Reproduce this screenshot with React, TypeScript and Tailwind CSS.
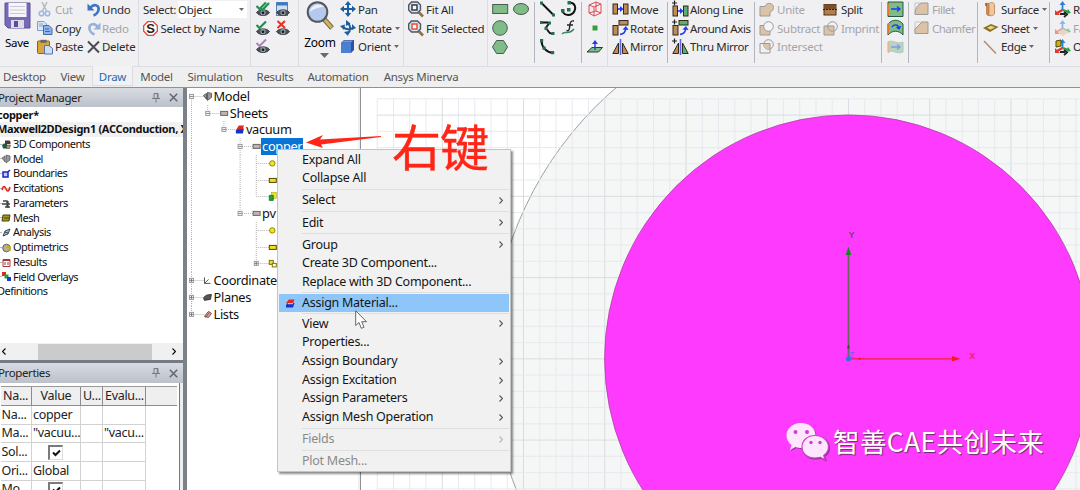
import type { ReactNode } from "react";

type P = { children?: ReactNode };

/* ---------- ribbon building blocks ---------- */

function Group({ w, dark, tall, children }: P & { w: string; dark?: boolean; tall?: boolean }) {
  return (
    <div className={`relative flex shrink-0 ${w}`}>
      {children}
      <span
        className={`absolute right-0 top-0 w-px ${tall ? "h-[66px]" : "mt-0.5 h-[61px]"} ${
          dark ? "bg-[#b2b5bd]" : "bg-[#dcdde2]"
        }`}
      />
    </div>
  );
}

function Col({ w, children }: P & { w: string }) {
  return <div className={`flex shrink-0 flex-col ${w}`}>{children}</div>;
}

function Tool({
  icon,
  label,
  off,
  caret,
  iw = "w-[18px]",
}: {
  icon: ReactNode;
  label?: string;
  off?: boolean;
  caret?: boolean;
  iw?: string;
}) {
  return (
    <div className={`flex h-[18.7px] items-center ${off ? "text-[#a4a4a8]" : "text-[#2b2b2b]"}`}>
      <span className={`flex shrink-0 items-center ${iw}`}>{icon}</span>
      {label && <span className="relative top-[0.4px] whitespace-nowrap">{label}</span>}
      {caret && <Caret />}
    </div>
  );
}

function Caret({ big }: { big?: boolean }) {
  return big ? (
    <svg width="9" height="5" viewBox="0 0 9 5">
      <path d="M0 0H9L4.5 5Z" fill="#6a6a6e" />
    </svg>
  ) : (
    <svg className="ml-[3px] shrink-0" width="5" height="3" viewBox="0 0 5 3">
      <path d="M0 0H5L2.5 3Z" fill="#6a6a6e" />
    </svg>
  );
}

function Ico({ w = 16, h = 16, dim, children }: P & { w?: number; h?: number; dim?: boolean }) {
  return (
    <svg width={w} height={h} viewBox={`0 0 ${w} ${h}`} fill="none" className={`shrink-0 overflow-visible ${dim ? "opacity-50" : ""}`}>
      {children}
    </svg>
  );
}

/* ---------- ribbon icons ---------- */

const SaveIcon = () => (
  <Ico w={27} h={27}>
    <path d="M1 1H26V26H4L1 23Z" fill="#7868b8" stroke="#5d5099" />
    <rect x="4.500" y="1" width="18" height="14" fill="#f5f5fa" />
    <path d="M6 4.500H21M6 8H21M6 11.500H21" stroke="#c9c9d4" />
    <rect x="7" y="18" width="13" height="8" fill="#dcdce6" />
    <rect x="10" y="19" width="4" height="6" fill="#5a4e97" />
  </Ico>
);

const CutIcon = () => (
  <Ico dim>
    <path d="M5 1L9.500 10M10 1L5.500 10" stroke="#7a8594" strokeWidth="1.600" />
    <circle cx="4.500" cy="12.500" r="2.300" stroke="#4a86cf" strokeWidth="1.600" />
    <circle cx="10.500" cy="12.500" r="2.300" stroke="#4a86cf" strokeWidth="1.600" />
  </Ico>
);

const CopyIcon = () => (
  <Ico>
    <path d="M.5 1.500H7L9.500 4V10.500H.5Z" fill="#dce8fa" stroke="#7d9cc9" />
    <path d="M2 4H6M2 6H6" stroke="#7d9cc9" />
    <path d="M6.500 5.500H12L15 8.500V14.500H6.500Z" fill="#8fb4ea" stroke="#45699f" />
    <path d="M8 9H12M8 11.500H13" stroke="#3f67a8" />
  </Ico>
);

const PasteIcon = () => (
  <Ico>
    <rect x=".5" y="2" width="12" height="12.500" rx="1" fill="#dba53a" stroke="#8a6319" />
    <rect x="3.500" y=".8" width="6" height="3" fill="#666" />
    <path d="M7.500 6.500H12L15.500 9.500V15H7.500Z" fill="#cfdef6" stroke="#5476ad" />
  </Ico>
);

const UndoIcon = ({ dim }: { dim?: boolean }) => (
  <Ico w={14} h={15} dim={dim}>
    <g transform={dim ? "translate(14 0) scale(-1 1)" : undefined}>
      <path d="M3.500 5.500C7 1.500 12.500 3 11.500 8C11 10.500 9 12.500 6.500 13.500" stroke="#3f73c4" strokeWidth="2.600" />
      <path d="M.5 1.500V8.500H7.500Z" fill="#3f73c4" />
    </g>
  </Ico>
);

const DeleteIcon = () => (
  <Ico w={14} h={14}>
    <path d="M1 1.500L12 12.500M12 1.500L1 12.500" stroke="#4b4b4f" strokeWidth="2" />
  </Ico>
);

const NameIcon = () => (
  <Ico w={15} h={15}>
    <path d="M4.700.7H10.300L14.300 4.700V10.300L10.300 14.300H4.700L.7 10.300V4.700Z" fill="#fff" stroke="#e0463c" strokeWidth="1.300" />
    <text x="7.500" y="12" textAnchor="middle" className="font-['Liberation_Sans'] text-[13px] font-bold tracking-normal" fill="#222">
      S
    </text>
  </Ico>
);

function EyeIcon({ kind }: { kind: "all" | "sheet" | "on" | "off" | "faint" }) {
  return (
    <Ico w={14} h={15}>
      {kind === "sheet" && (
        <>
          <rect x=".5" y=".5" width="11" height="13" fill="#cfe0f5" stroke="#5b84bd" />
          <rect x=".5" y=".5" width="11" height="3" fill="#3f78c3" />
        </>
      )}
      <path d="M.5 10.500C3 7 11 7 13.500 10.500C11 14.500 3 14.500.5 10.500Z" fill="#4b5157" stroke="#34393d" />
      <circle cx="7" cy="10.700" r="2.600" fill="#8d9aa5" />
      <circle cx="7" cy="10.700" r="1.300" fill="#15181a" />
      {(kind === "on" || kind === "all") && <path d="M.5 4L3.500 7L10 .5" stroke="#1f9150" strokeWidth="2.200" />}
      {kind === "all" && <path d="M4 5.500L6.500 8L13 1" stroke="#1f9150" strokeWidth="2.200" />}
      {kind === "faint" && <path d="M.5 4L3.500 7L10 .5" stroke="#b07dbb" strokeWidth="1.800" />}
      {kind === "off" && <path d="M1.500 0L9 7M9 0L1.500 7" stroke="#ef2b20" strokeWidth="2" />}
    </Ico>
  );
}

const ZoomIcon = () => (
  <Ico w={29} h={30}>
    <path d="M18 19L26 28" stroke="#77683c" strokeWidth="5" />
    <path d="M18.500 19.500L25.500 27.500" stroke="#cdb469" strokeWidth="3" />
    <circle cx="11.500" cy="12" r="9.800" fill="#b5c9ee" stroke="#55585f" strokeWidth="2" />
    <path d="M4 12C5 5 13 2 18 7C15 7 8 8 4 12Z" fill="#e9f1fd" />
  </Ico>
);

const PanIcon = () => (
  <Ico>
    <path d="M8 2V14M2 8H14" stroke="#1d5f9e" strokeWidth="2" />
    <path d="M8 0L11.200 4H4.800ZM8 16L11.200 12H4.800ZM0 8L4 4.800V11.200ZM16 8L12 4.800V11.200Z" fill="#1d5f9e" />
  </Ico>
);

const RotateViewIcon = () => (
  <Ico>
    <path d="M8 3C11 6 11 11 7.500 14M3 7C6 10 11 10 14 7" stroke="#1d5f9e" strokeWidth="2" />
    <path d="M6 0L10.500 3.500L6 6ZM4 12L8 16L9 11ZM0 6L5 4.500L4 10ZM16 8L12 4V10Z" fill="#1d5f9e" />
  </Ico>
);

const OrientIcon = () => (
  <Ico w={15} h={15}>
    <path d="M1 4L4 1H14V11L11 14H1Z" fill="#2c559f" />
    <rect x="1" y="4" width="10" height="10" rx="1" fill="#4a80d4" />
    <path d="M2 3.500L4 1.500H13L11 3.500Z" fill="#6f9be0" />
  </Ico>
);

const FitIcon = ({ c }: { c: string }) => (
  <Ico>
    <path d="M10.500 11L15 15.500" stroke="#8b7440" strokeWidth="2.600" />
    <path d="M3.500 1H9.500L12.500 4V9L9.500 12H3.500L.7 9V4Z" fill="#d7e3f7" stroke="#505560" strokeWidth="1.400" />
    <rect x="4" y="4" width="5" height="5" fill="#fff" stroke={c} strokeWidth="1.500" />
  </Ico>
);

const green = "#7fbc88";

const LineIcons = {
  line: (
    <Ico>
      <path d="M1.500 2L14 14.500" stroke="#111" strokeWidth="2" />
      <path d="M0 .5H3V3.500H0ZM12 12.500H15V15.500H12Z" fill="#23704f" />
    </Ico>
  ),
  arc: (
    <Ico>
      <path d="M9 1.500C13.500 2 15.500 6 13.500 10C11 15 3.500 15.500 1.500 10" stroke="#111" strokeWidth="2" />
      <path d="M6.500 0H10V3.500H6.500ZM0 8H3.500V11.500H0ZM6 7H9.500V10.500H6Z" fill="#23704f" />
    </Ico>
  ),
  spline: (
    <Ico>
      <path d="M1 2.500H8C11 4 4 7 6.500 9C9 10.500 8 14 12.500 13.500" stroke="#111" strokeWidth="1.800" />
      <path d="M0 1H3V4H0ZM8 1.500H11V4.500H8ZM4.500 7H7.500V10H4.500ZM11.500 12H14.500V15H11.500Z" fill="#23704f" />
    </Ico>
  ),
  eq: (
    <Ico>
      <path d="M13 1C9 0 9 4 8.500 8C8 11 7 11 5.500 10.500M6 5H12" stroke="#222" strokeWidth="1.400" />
      <path d="M1 14C4 10 7 16 13 9" stroke="#3c8664" strokeWidth="1.400" />
    </Ico>
  ),
  arc3: (
    <Ico>
      <path d="M1.500 1.500C1.500 8 6 13 13 14" stroke="#111" strokeWidth="2" />
      <path d="M0 0H3.200V3.200H0ZM2.500 7.500H5.700V10.700H2.500ZM11 12H14.200V15.200H11Z" fill="#23704f" />
    </Ico>
  ),
};

const brown = "#c08c55";

const MoveIcon = ({ second = brown, plus }: { second?: string; plus?: boolean }) => (
  <Ico w={17}>
    <rect x="1" y={plus ? 5 : 3} width="4.500" height="10" fill={brown} stroke="#33291c" />
    <rect x="11.500" y={plus ? 5 : 3} width="4.500" height="10" fill={second} stroke="#33291c" />
    <path d={plus ? "M6 10H9" : "M6 8H9"} stroke="#2239ee" strokeWidth="1.600" />
    <path d={plus ? "M8 7L11.500 10L8 13Z" : "M8 5L11.500 8L8 11Z"} fill="#2239ee" />
    {plus && <Plus />}
  </Ico>
);

const Plus = () => <path d="M0 2H5M2.500 -.5V4.500" stroke="#222" strokeWidth="1.200" />;

const TurnIcon = ({ second = brown, plus }: { second?: string; plus?: boolean }) => (
  <Ico w={17}>
    <rect x="1" y="5.500" width="5" height="9.500" fill={brown} stroke="#33291c" />
    <rect x="7" y=".5" width="9" height="4.500" fill={second} stroke="#33291c" />
    <path d="M8 14.500C11 14 13.500 12 13.500 9" stroke="#2239ee" strokeWidth="1.600" />
    <path d="M10.500 9.500L14 6L16.500 10Z" fill="#2239ee" />
    {plus && <Plus />}
  </Ico>
);

const MirrorIcon = ({ second = brown, plus }: { second?: string; plus?: boolean }) => (
  <Ico w={17}>
    <path d="M.8 14.500L6.500 4V14.500Z" fill={brown} stroke="#33291c" />
    <path d="M16.200 14.500L10.500 4V14.500Z" fill={second} stroke="#33291c" />
    <path d="M8.500 0V16" stroke="#5b68ee" strokeWidth="1.600" />
    {plus && <Plus />}
  </Ico>
);

const tan = "#dcc3a8";
const grey = "#9a9a9c";

const UniteIcon = () => (
  <Ico w={15} h={15}>
    <path d="M1 4.500H6C7 0 14.500.5 14.500 5.500C14.500 9 12 9.500 11 10V14H1Z" fill={tan} stroke={grey} />
  </Ico>
);
const SubtractIcon = () => (
  <Ico w={15} h={15}>
    <path d="M1 4.500H11V14H1Z" fill={tan} stroke={grey} />
    <circle cx="9.500" cy="5.500" r="4.800" fill="#f5f5f7" stroke={grey} />
  </Ico>
);
const IntersectIcon = () => (
  <Ico w={15} h={15}>
    <circle cx="9.500" cy="5.500" r="4.800" stroke={grey} />
    <path d="M4.500 4.500H11V10C7 10.500 5 8 4.500 4.500Z" fill={tan} />
    <path d="M1 4.500H11V14H1Z" stroke={grey} />
  </Ico>
);
const ImprintIcon = () => (
  <Ico w={15} h={15}>
    <path d="M1 5H11V14H1Z" fill={tan} stroke={grey} />
    <circle cx="9.500" cy="5.500" r="4.800" stroke={grey} />
  </Ico>
);
const SplitIcon = () => (
  <Ico w={15} h={13}>
    <rect x="1" y="1.500" width="12" height="10.500" fill="#b57f4b" stroke="#4c321a" />
    <rect x="1" y="1.500" width="12" height="4.500" fill="#7a5029" />
    <path d="M0 6.500H15" stroke="#222" strokeDasharray="2 1" />
  </Ico>
);

const SheetGreen = ({ kind }: { kind: "flat" | "bend" | "wave" }) => (
  <Ico w={17} dim={kind === "wave"}>
    {kind === "flat" && <path d="M1 1H16V15.500H1Z" fill={green} stroke="#1f5d3c" />}
    {kind === "bend" && <path d="M1 4C5 -1 12 -1 16 4V15C12 10 5 10 1 15Z" fill={green} stroke="#1f5d3c" />}
    {kind === "wave" && <path d="M1 3C6 0 10 6 16 3V13C10 16 6 10 1 13Z" fill={green} stroke="#6fa587" />}
    <path d="M1.500 3V14" stroke="#e07a31" strokeWidth="1.600" />
    {kind === "bend" ? (
      <path d="M5 7C7 4 11 4 12 8M9.500 7L12 9L13.500 6" stroke="#2239ee" strokeWidth="1.400" />
    ) : (
      <path d="M4 8H13M10 5.500L13 8L10 10.500" stroke="#2239ee" strokeWidth="1.300" />
    )}
  </Ico>
);

const FilletIcon = ({ cut }: { cut?: boolean }) => (
  <Ico w={15} h={14}>
    <path d="M1 12V1H9" stroke="#c5c5c7" />
    <path d={cut ? "M1 12.500V8L8 1H14V12.500Z" : "M1 12.500C1 5 5 1 10 1H14V12.500Z"} fill={tan} stroke={grey} />
  </Ico>
);

const SurfaceIcon = () => (
  <Ico>
    <path d="M3 2C5 1 8 3 9 4V14C7 16 3.500 15 3 13Z" fill="#c98a52" />
    <path d="M6 2.500C8 .5 11.500 1.500 11.500 4V13C10 15 7 15 6 14.500Z" fill="#f0c79d" stroke="#b98050" strokeWidth=".8" />
    <path d="M3 2V5" stroke="#865427" strokeWidth="1.400" />
  </Ico>
);
const SheetIcon = () => (
  <Ico>
    <path d="M0 8L8 4L15.500 7L7 12Z" fill="#8a7020" />
    <path d="M4 7.700L8 5.800L12 7.300L7.500 9.700Z" fill="#e6d48c" />
  </Ico>
);
const EdgeIcon = () => (
  <Ico>
    <path d="M1 2L13 14.500" stroke="#b98a66" strokeWidth="1.500" />
  </Ico>
);
const CsIcon = ({ dim, cube }: { dim?: boolean; cube?: boolean }) => (
  <Ico dim={dim}>
    <path d="M7.500 9V3" stroke="#2a80d8" strokeWidth="1.800" />
    <path d="M4.500 4L7.500 0L10.500 4Z" fill="#2a80d8" />
    <path d="M7.500 9L2 12" stroke="#e0362d" strokeWidth="2.400" />
    <path d="M0 9V14H5Z" fill="#e0362d" />
    <path d="M8 9L13 11" stroke="#2e9a49" strokeWidth="2.400" />
    <path d="M11 13L16 12L13 8Z" fill="#2e9a49" />
    {dim ? <path d="M2 12L8 9L14 12L8 16Z" fill="#e7b98e" /> : <path d="M5 13H10M9 11L12 13.500L9 16" stroke="#222" strokeWidth="1.800" />}
    {cube && <path d="M1 2L6 1V7L1 8Z" fill="#c9b412" stroke="#4f4708" />}
  </Ico>
);

function Ribbon() {
  return (
    <div className="flex h-[67px] shrink-0 overflow-hidden border-b border-[#dcdde2] bg-[#f0f0f3] text-[11.5px] leading-none tracking-[-0.27px]">
      <Group w="w-[139px]" tall>
        <div className="flex w-[37px] flex-col items-center pt-[2px] pr-[3px]">
          <SaveIcon />
          <span className="mt-[8px] whitespace-nowrap">Save</span>
        </div>
        <Col w="w-[50px]">
          <Tool icon={<CutIcon />} label="Cut" off />
          <Tool icon={<CopyIcon />} label="Copy" />
          <Tool icon={<PasteIcon />} label="Paste" />
        </Col>
        <Col w="w-[52px]">
          <Tool icon={<UndoIcon />} label="Undo" iw="w-[15px]" />
          <Tool icon={<UndoIcon dim />} label="Redo" off iw="w-[15px]" />
          <Tool icon={<DeleteIcon />} label="Delete" iw="w-[15px]" />
        </Col>
      </Group>
      <Group w="w-[112px]" tall>
        <Col w="w-[112px] pl-[4px]">
          <div className="flex h-[18.700px] items-center text-[#2b2b2b]">
            <span className="relative top-[0.4px] w-[35px]">Select:</span>
            <span className="flex h-[17px] w-[69px] items-center justify-between bg-white pr-[3px]">
              <span className="relative top-[0.4px]">Object</span>
              <Caret />
            </span>
          </div>
          <Tool icon={<NameIcon />} label="Select by Name" iw="w-[17.500px]" />
        </Col>
      </Group>
      <Group w="w-[48px]" tall>
        <Col w="w-[25px] pl-[5px]">
          <Tool icon={<EyeIcon kind="all" />} />
          <Tool icon={<EyeIcon kind="on" />} />
          <Tool icon={<EyeIcon kind="faint" />} />
        </Col>
        <Col w="w-[20px]">
          <Tool icon={<EyeIcon kind="sheet" />} />
          <Tool icon={<EyeIcon kind="off" />} />
        </Col>
      </Group>
      <Group w="w-[105px]" tall>
        <div className="flex w-[41px] flex-col items-center pl-[1px]">
          <ZoomIcon />
          <span className="mt-[7px] text-[12px]">Zoom</span>
          <span className="mt-[4px] ml-2">
            <Caret big />
          </span>
        </div>
        <Col w="w-[62px]">
          <Tool icon={<PanIcon />} label="Pan" />
          <Tool icon={<RotateViewIcon />} label="Rotate" caret />
          <Tool icon={<OrientIcon />} label="Orient" caret />
        </Col>
      </Group>
      <Group w="w-[84px]" tall>
        <Col w="w-[82px] pl-[4px]">
          <Tool icon={<FitIcon c="#333a48" />} label="Fit All" />
          <Tool icon={<FitIcon c="#e8502f" />} label="Fit Selected" />
        </Col>
      </Group>
      <Group w="w-[47px]" dark>
        <Col w="w-[25px] pl-[4px]">
          <Tool icon={<Ico><rect x=".7" y="3.500" width="15" height="9" fill={green} stroke="#4c5a50" /></Ico>} />
          <Tool icon={<Ico><circle cx="8" cy="8" r="7.300" fill={green} stroke="#4c5a50" /></Ico>} />
          <Tool icon={<Ico><path d="M4.500 1.500H11.500L15.500 8L11.500 14.500H4.500L.5 8Z" fill={green} stroke="#4c5a50" /></Ico>} />
        </Col>
        <Col w="w-[20px]">
          <Tool icon={<Ico><ellipse cx="8" cy="8" rx="7.500" ry="5.500" fill={green} stroke="#4c5a50" /></Ico>} />
        </Col>
      </Group>
      <Group w="w-[47px]" dark>
        <Col w="w-[26px] pl-[5px]">
          <Tool icon={LineIcons.line} />
          <Tool icon={LineIcons.spline} />
          <Tool icon={LineIcons.arc3} />
        </Col>
        <Col w="w-[20px]">
          <Tool icon={LineIcons.arc} />
          <Tool icon={LineIcons.eq} />
        </Col>
      </Group>
      <Group w="w-[26px]" tall>
        <Col w="w-[26px] pl-[5px]">
          <Tool
            icon={
              <Ico>
                <path d="M2 4L9 1L14 3V12L7 15L2 12ZM2 4L7 6V15M7 6L14 3M2 12L9 10V1M9 10L14 12" stroke="#dd4a52" />
              </Ico>
            }
          />
          <Tool icon={<Ico><rect x="5.500" y="5.500" width="5" height="5" fill="#35a03b" /></Ico>} />
          <Tool
            icon={
              <Ico>
                <path d="M0 13L5 8.500H15.500L11.500 13Z" fill={green} stroke="#2d3a31" />
                <path d="M8 11V3" stroke="#2239ee" strokeWidth="1.400" />
                <path d="M5 5L8 1L11 5Z" fill="#2239ee" />
              </Ico>
            }
          />
        </Col>
      </Group>
      <Group w="w-[60px]" dark>
        <Col w="w-[60px] pl-[4px]">
          <Tool icon={<MoveIcon />} label="Move" />
          <Tool icon={<TurnIcon />} label="Rotate" />
          <Tool icon={<MirrorIcon />} label="Mirror" />
        </Col>
      </Group>
      <Group w="w-[87px]" dark>
        <Col w="w-[87px] pl-[4px] tracking-[-0.4px]">
          <Tool icon={<MoveIcon second="#59b072" plus />} label="Along Line" />
          <Tool icon={<TurnIcon second="#59b072" plus />} label="Around Axis" />
          <Tool icon={<MirrorIcon second="#59b072" plus />} label="Thru Mirror" />
        </Col>
      </Group>
      <Group w="w-[127px]" dark>
        <Col w="w-[68px] pl-[4px]">
          <Tool icon={<UniteIcon />} label="Unite" off />
          <Tool icon={<SubtractIcon />} label="Subtract" off />
          <Tool icon={<IntersectIcon />} label="Intersect" off />
        </Col>
        <Col w="w-[58px] tracking-[-0.4px]">
          <Tool icon={<SplitIcon />} label="Split" />
          <Tool icon={<ImprintIcon />} label="Imprint" off />
        </Col>
      </Group>
      <Group w="w-[27px]" dark>
        <Col w="w-[26px] pl-[5px]">
          <Tool icon={<SheetGreen kind="flat" />} />
          <Tool icon={<SheetGreen kind="bend" />} />
          <Tool icon={<SheetGreen kind="wave" />} />
        </Col>
      </Group>
      <Group w="w-[69px]" dark>
        <Col w="w-[69px] pl-[5px] tracking-[-0.5px]">
          <Tool icon={<FilletIcon />} label="Fillet" off />
          <Tool icon={<FilletIcon cut />} label="Chamfer" off />
        </Col>
      </Group>
      <Group w="w-[72px]" dark>
        <Col w="w-[72px] pl-[5px] tracking-[-0.4px]">
          <Tool icon={<SurfaceIcon />} label="Surface" caret />
          <Tool icon={<SheetIcon />} label="Sheet" caret />
          <Tool icon={<EdgeIcon />} label="Edge" caret />
        </Col>
      </Group>
      <Col w="w-[60px] pl-[5px]">
        <Tool icon={<CsIcon />} label="Relative" />
        <Tool icon={<CsIcon dim />} label="Face" off />
        <Tool icon={<CsIcon cube />} label="Object" />
      </Col>
    </div>
  );
}

const tabs = [
  { name: "Desktop", w: "w-[49px]" },
  { name: "View", w: "w-[43px] pl-[4px]" },
  { name: "Draw", w: "w-[41px]", active: true },
  { name: "Model", w: "w-[47px]" },
  { name: "Simulation", w: "w-[70px]" },
  { name: "Results", w: "w-[50px]" },
  { name: "Automation", w: "w-[76px]" },
  { name: "Ansys Minerva", w: "w-[90px]" },
];

function TabBar() {
  return (
    <div className="flex h-[20px] shrink-0 whitespace-nowrap bg-[#efefef] text-[11.5px] leading-none tracking-[-0.28px] text-[#555]">
      {tabs.map((t) => (
        <div
          key={t.name}
          className={`flex shrink-0 items-center justify-center ${t.w} ${
            t.active ? "-mt-px h-[20px] border-x border-b border-[#dcdde2] bg-[#f2f2f4] pt-[2px] text-[#1f6cab]" : "h-[19px]"
          }`}
        >
          {t.name}
        </div>
      ))}
    </div>
  );
}

/* ---------- left docks ---------- */

function DockHeader({ title, h }: { title: string; h: string }) {
  return (
    <div className={`flex ${h} shrink-0 items-center bg-linear-to-b from-[#d8dbe2] to-[#bcc1ca] text-[11.5px] leading-none tracking-[-0.38px] text-[#222]`}>
      <span className="-ml-[2px] grow whitespace-nowrap">{title}</span>
      <svg width="8" height="10" viewBox="0 0 8 10" fill="none" stroke="#75787f">
        <path d="M2 .5H6V5.500H2ZM0 5.500H8M4 5.500V9.500M5.300 1V5" />
      </svg>
      <svg className="ml-[9px] mr-[5px]" width="9" height="9" viewBox="0 0 9 9" stroke="#62656b" strokeWidth="1.500">
        <path d="M.8.800L8.200 8.200M8.200.8L.8 8.200" />
      </svg>
    </div>
  );
}

const projectItems: { label: string; icon: ReactNode }[] = [
  {
    label: "3D Components",
    icon: (
      <>
        <path d="M3 .5H7.500L8.500 2V4H3Z" fill="#4c3a34" />
        <path d="M0 5L2 3.500H5V8.500H1Z" fill="#1f5a55" />
        <path d="M4.500 5H8.500L7.500 8.500H4.500Z" fill="#c7902f" stroke="#333" strokeWidth=".5" />
      </>
    ),
  },
  { label: "Model", icon: <path d="M0 4L3 2V8ZM4 1V9L8 6V2Z" fill="#999" stroke="#555" strokeWidth=".7" /> },
  { label: "Boundaries", icon: <path d="M1 3H6V8H1ZM6 3L8 1" fill="#c9c9ff" stroke="#2020c0" strokeWidth="1.500" /> },
  { label: "Excitations", icon: <path d="M0 6C1 1 3 2 4 5S7 8 8 3" fill="#f6b8b3" stroke="#dd2c22" strokeWidth="1.500" /> },
  { label: "Parameters", icon: <path d="M1 2H5V8M0 5H8M6 2V9M3 8H8" stroke="#444" strokeWidth="1.300" /> },
  { label: "Mesh", icon: <path d="M1 2H8L7 8H0ZM2 5H7" fill="#a39a1b" stroke="#46420c" /> },
  { label: "Analysis", icon: <path d="M1 8L3 3L8 1L6 6ZM3 4L6 5" fill="#a9b7c0" stroke="#394b58" /> },
  {
    label: "Optimetrics",
    icon: (
      <>
        <circle cx="4.500" cy="5" r="3.800" fill="#b9b48a" stroke="#5b6078" />
        <path d="M4 4H8V8" stroke="#c0b000" strokeWidth="1.500" />
      </>
    ),
  },
  { label: "Results", icon: <path d="M1 1.500H8V8.500H1ZM3 4V7M6 4V7M1 2.500H8" fill="#fff" stroke="#a83a36" /> },
  {
    label: "Field Overlays",
    icon: (
      <>
        <path d="M0 0H4V4H0Z" fill="#e02a1f" />
        <path d="M2.500 2.500H6.500V6.500H2.500Z" fill="#19a23a" />
        <path d="M5 5H9V9H5Z" fill="#1c36d8" />
      </>
    ),
  },
];

function ProjectManager() {
  return (
    <div className="flex h-[272px] flex-col">
      <DockHeader title="Project Manager" h="h-[19px]" />
      <div className="h-[236px] overflow-hidden bg-white text-[11px] leading-[14.75px] tracking-[-0.5px] text-[#111]">
        <div className="-ml-[3px] h-[15px] pt-[0.5px] font-bold tracking-[-0.3px]">copper*</div>
        <div className="h-[14.750px] whitespace-nowrap bg-[#f1f1f1] font-bold tracking-[-0.32px]">
          <span className="-ml-[3px]">Maxwell2DDesign1 (ACConduction, XY)</span>
        </div>
        {projectItems.map((p) => (
          <div key={p.label} className="flex h-[14.750px] items-center">
            <span className="h-px w-[2px] bg-[#bbb]" />
            <svg className="mr-[2px] overflow-visible" width="9" height="9" viewBox="0 0 9 9" fill="none">
              {p.icon}
            </svg>
            {p.label}
          </div>
        ))}
        <div className="-ml-[3px]">Definitions</div>
      </div>
      <div className="flex h-[17px] items-center bg-[#f0f0f0]">
        <Chevron className="ml-[2px] rotate-180" />
        <div className="ml-[32px] h-[16px] w-[114px] bg-[#cbcbcb]" />
        <Chevron className="ml-[20px]" />
      </div>
    </div>
  );
}

function Chevron({ className = "" }: { className?: string }) {
  return (
    <svg className={`shrink-0 ${className}`} width="4" height="7" viewBox="0 0 4 7" fill="none" stroke="currentColor" strokeWidth="1.100">
      <path d="M.5.5L3.500 3.500L.5 6.500" />
    </svg>
  );
}

const cell = "flex h-full shrink-0 items-center overflow-hidden whitespace-nowrap border-r border-b";

const properties: [string, string | boolean, string][] = [
  ["Na...", "copper", ""],
  ["Ma...", '"vacuu...', '"vacu...'],
  ["Sol...", true, ""],
  ["Ori...", "Global", ""],
  ["Mo...", true, ""],
];

function Properties() {
  return (
    <div className="flex grow flex-col overflow-hidden">
      <DockHeader title="Properties" h="h-[20px]" />
      <div className="mr-[3px] h-[120px] overflow-hidden border-r border-[#777] bg-white pt-[3px] pl-[1px] text-[12.5px] leading-none tracking-[-0.3px] text-[#222]">
        <div className="mr-[2px] flex h-[20px] border-t border-[#999] bg-[#efefef]">
          <div className={`${cell} w-[31px] border-[#8c8c8c] pl-[2px]`}>Na...</div>
          <div className={`${cell} w-[49px] justify-center border-[#8c8c8c]`}>Value</div>
          <div className={`${cell} w-[22px] border-[#8c8c8c] pl-[2px]`}>U...</div>
          <div className={`${cell} w-[43px] border-[#8c8c8c] pl-[2px]`}>Evalu...</div>
          <div className="grow border-b border-[#8c8c8c]" />
        </div>
        {properties.map(([name, value, evaluated]) => (
          <div key={name + String(value)} className="flex h-[18.700px]">
            <div className={`${cell} w-[31px] border-[#d2d2d2] pl-[0.5px]`}>{name}</div>
            <div className={`${cell} w-[49px] border-[#d2d2d2] pl-px`}>
              {value === true ? (
                <span className="ml-[15px] flex h-[15px] w-[15px] shrink-0 items-center justify-center border-t-2 border-l-2 border-r border-b border-[#7a7a7a] border-r-[#ddd] border-b-[#ddd]">
                  <svg width="9" height="8" viewBox="0 0 9 8" fill="none" stroke="#111" strokeWidth="2">
                    <path d="M1 3.500L3.500 6L8 1.500" />
                  </svg>
                </span>
              ) : (
                value
              )}
            </div>
            <div className={`${cell} w-[22px] border-[#d2d2d2]`} />
            <div className={`${cell} w-[43px] border-[#d2d2d2] pl-px`}>{evaluated}</div>
          </div>
        ))}
      </div>
    </div>
  );
}

/* ---------- model tree ---------- */

type Kind = "model" | "sheet" | "material" | "dot" | "rect" | "copy" | "sub" | "axes" | "plane" | "list";

function NodeGlyph({ kind, x }: { kind: Kind; x: number }) {
  return (
    <g transform={`translate(${x} 8.400)`}>
      {kind === "model" && <path d="M-4 -1L-1 -3V3ZM0 -4V4L4 1V-3Z" fill="#999" stroke="#444" strokeWidth=".8" />}
      {kind === "sheet" && <rect x="-3" y="-2" width="7" height="4" fill="#c3b3b5" stroke="#6f6567" />}
      {kind === "material" && (
        <>
          <path d="M-4 1L-2 -1H4L3 4H-4Z" fill="#1a2fc4" />
          <path d="M-3 -1L-1 -4H4L3 0H-3Z" fill="#e0281d" />
        </>
      )}
      {kind === "dot" && <circle r="2.700" fill="#f3e51c" stroke="#8f850a" />}
      {kind === "rect" && <rect x="-3" y="-2" width="7" height="4" fill="#efe11b" stroke="#4d4708" />}
      {kind === "copy" && (
        <>
          <rect x="-1" y="-4" width="5" height="6" fill="#efe11b" stroke="#a39a1b" strokeWidth=".5" />
          <path d="M-3 -1H1V4H-3Z" fill="#17a92f" stroke="#0b6118" strokeWidth=".7" />
        </>
      )}
      {kind === "sub" && (
        <>
          <rect x="-3" y="-3" width="4" height="4" fill="#efe11b" stroke="#7d7508" />
          <rect x="0" y="0" width="4" height="3.500" fill="#fff" stroke="#7d7508" />
        </>
      )}
      {kind === "axes" && <path d="M-3 -3V3H3M-3 3L1 -1" stroke="#555" />}
      {kind === "plane" && <path d="M-4 1C-3 -2 0 -3 4 -3L3 2L-3 3Z" fill="#555" stroke="#222" strokeWidth=".7" />}
      {kind === "list" && <path d="M-3 2L1 -3L4 -1L1 3ZM-2 3L2 -2" fill="#d9aaa6" stroke="#8c4542" />}
    </g>
  );
}

type Node = { level: number; kind: Kind; label?: string; box?: "-" | "+"; guides: number[]; last?: boolean; selected?: boolean };

const nodes: Node[] = [
  { level: 0, kind: "model", label: "Model", box: "-", guides: [] },
  { level: 1, kind: "sheet", label: "Sheets", box: "-", guides: [0], last: true },
  { level: 2, kind: "material", label: "vacuum", box: "-", guides: [0], last: true },
  { level: 3, kind: "sheet", label: "copper", box: "-", guides: [0], selected: true },
  { level: 4, kind: "dot", guides: [0, 3] },
  { level: 4, kind: "rect", guides: [0, 3] },
  { level: 4, kind: "copy", guides: [0, 3], last: true },
  { level: 3, kind: "sheet", label: "pv", box: "-", guides: [0], last: true },
  { level: 4, kind: "dot", guides: [0] },
  { level: 4, kind: "rect", guides: [0] },
  { level: 4, kind: "sub", box: "+", guides: [0], last: true },
  { level: 0, kind: "axes", label: "Coordinate", box: "+", guides: [] },
  { level: 0, kind: "plane", label: "Planes", box: "+", guides: [] },
  { level: 0, kind: "list", label: "Lists", box: "+", guides: [], last: true },
];

function ModelTree() {
  return (
    <div className="w-[171px] shrink-0 overflow-hidden bg-white text-[12.8px] leading-none tracking-[-0.32px] text-[#111]">
      {nodes.map((n, i) => {
        const x = 4.5 + n.level * 16.2;
        return (
          <div key={i} className="flex h-[16.750px] items-center whitespace-nowrap">
            <svg className="shrink-0 overflow-visible" width={x + 22} height="16.800" viewBox={`0 0 ${x + 22} 16.800`} fill="none">
              <g stroke="#b5b5b5" strokeDasharray="1 1">
                {n.guides.map((g) => (
                  <path key={g} d={`M${4.5 + g * 16.2} 0V16.800`} />
                ))}
                <path d={`M${x} ${i === 0 ? 8.4 : 0}V${n.last ? 8.4 : 16.8}M${x} 8.500H${x + 14}`} />
              </g>
              {n.box && (
                <>
                  <rect x={x - 2} y="6.400" width="4" height="4" fill="#fff" stroke="#9a9a9a" />
                  <path d={n.box === "+" ? `M${x - 1.5} 8.400H${x + 1.5}M${x} 7V10` : `M${x - 1.5} 8.400H${x + 1.5}`} stroke="#666" strokeWidth=".8" />
                </>
              )}
              <NodeGlyph kind={n.kind} x={x + 16} />
            </svg>
            {n.label && (
              <span className={`flex h-full items-center ${n.selected ? "-ml-px bg-[#0a74d6] px-px text-white" : ""}`}>{n.label}</span>
            )}
          </div>
        );
      })}
    </div>
  );
}

/* ---------- drawing area ---------- */

const step = 16.29;
const cx = 487.8;
const cy = 271.5;

function Canvas() {
  const cols = Array.from({ length: 44 }, (_, i) => i - 29);
  const rows = Array.from({ length: 26 }, (_, i) => i - 16);
  return (
    <svg className="h-full grow bg-white" viewBox="0 0 719 403" width="719" height="403" fill="none">
      <circle cx={cx} cy={cy} r="358" fill="#f4f7f5" stroke="#85888a" strokeWidth=".8" />
      {cols.map((c) => (
        <path key={c} d={`M${cx + c * step} ${cy - 16 * step}V403`} stroke={c % 5 === 0 ? "#d5d8df" : "#e5e7ee"} strokeWidth=".9" />
      ))}
      {rows.map((r) => (
        <path key={r} d={`M${cx - 29 * step} ${cy + r * step}H719`} stroke={r % 5 === 0 ? "#d5dadf" : "#e5e7ee"} strokeWidth=".9" />
      ))}
      <circle cx={cx} cy={cy} r="244.500" fill="#ff3aff" stroke="#a8449e" strokeWidth=".8" />
      <path d={`M${cx} ${cy}V167`} stroke="#64685f" strokeWidth="1.800" />
      <path d="M487.800 159L490.600 167.500H485Z" fill="#128a1e" />
      <path d="M487.800 257L489.300 261H486.300Z" fill="#225c2a" />
      <path d={`M${cx} ${cy}H592`} stroke="#f81e3c" strokeWidth="1.400" />
      <path d="M600 271.500L591.500 268.700V274.300Z" fill="#fb1722" />
      <path d="M501.500 271.500L498 270V273Z" fill="#fb1722" />
      <circle cx={cx} cy={cy} r="2.600" fill="#3172e0" />
      <g className="font-['Liberation_Sans'] text-[8.500px]">
        <text x="488" y="150" fill="#5a3f5c" stroke="#5a3f5c" strokeWidth=".2">
          Y
        </text>
        <text x="609" y="272" fill="#f5184a" stroke="#f5184a" strokeWidth=".2">
          X
        </text>
        <text x="488" y="271" fill="#6a62f0">
          Z
        </text>
      </g>
    </svg>
  );
}

/* ---------- context menu ---------- */

type Item = { label: string; sub?: boolean; off?: boolean; hot?: boolean } | "sep" | "thin";

const menu: Item[] = [
  { label: "Expand All" },
  { label: "Collapse All" },
  "sep",
  { label: "Select", sub: true },
  "sep",
  { label: "Edit", sub: true },
  "sep",
  { label: "Group", sub: true },
  { label: "Create 3D Component..." },
  { label: "Replace with 3D Component..." },
  "thin",
  { label: "Assign Material...", hot: true },
  "thin",
  { label: "View", sub: true },
  { label: "Properties..." },
  { label: "Assign Boundary", sub: true },
  { label: "Assign Excitation", sub: true },
  { label: "Assign Parameters", sub: true },
  { label: "Assign Mesh Operation", sub: true },
  "sep",
  { label: "Fields", sub: true, off: true },
  "sep",
  { label: "Plot Mesh...", off: true },
];

function ContextMenu() {
  return (
    <div className="absolute top-[149px] left-[277px] h-[323px] w-[234px] border border-[#c4c4c4] bg-[#f1f1f1] pt-[0.6px] text-[12.5px] leading-none tracking-[-0.26px] text-[#151515] shadow-[2px_2px_2px_rgba(0,0,0,0.45)]">
      {menu.map((m, i) =>
        typeof m === "string" ? (
          <div key={i} className={`ml-[24px] mr-px flex items-center ${m === "sep" ? "h-[3.400px]" : "h-[2.200px]"}`}>
            <div className="h-px w-full bg-[#dedede]" />
          </div>
        ) : (
          <div
            key={i}
            className={`flex h-[18.700px] items-center ${m.hot ? "mx-px bg-[#8ec6fa] pl-[7px] pr-[6px]" : "pl-[24px] pr-[7px]"} ${
              m.off ? "text-[#8a8a8a]" : ""
            }`}
          >
            {m.hot && (
              <svg className="mr-[7px] shrink-0" width="9" height="9" viewBox="0 0 9 9">
                <path d="M0 6L2 4H8.500L7 8.500H0Z" fill="#1a2fc4" />
                <path d="M0 4L3 .5H8.500L7 4.500H1Z" fill="#e0281d" />
                <path d="M2 4.700H7" stroke="#fff" strokeWidth=".8" />
              </svg>
            )}
            <span className="grow whitespace-nowrap">{m.label}</span>
            {m.sub && <Chevron className={m.off ? "text-[#b5b5b5]" : "text-[#555]"} />}
          </div>
        ),
      )}
    </div>
  );
}

function Annotation() {
  return (
    <>
      <svg className="absolute top-[134px] left-[306px]" width="76" height="16" viewBox="0 0 76 16">
        <path d="M0 8.500L17 1L14 5.500L75 2L75 3L15 10.500L17 14Z" fill="#ff2617" />
      </svg>
      <div className="absolute top-[115px] left-[392px] whitespace-nowrap font-['Noto_Sans_CJK_SC',sans-serif] text-[49px] leading-[60px] font-normal tracking-[-1px] text-[#ff2617] [-webkit-text-stroke:0.4px_#ff2617]">
        右键
      </div>
    </>
  );
}

function Cursor() {
  return (
    <svg className="absolute top-[310px] left-[355px]" width="13" height="20" viewBox="0 0 13 20">
      <path d="M.7.800V15.500L4 12.500L6.300 18.300L9 17.200L6.700 11.700H11.500Z" fill="#fff" stroke="#555" strokeWidth=".9" />
    </svg>
  );
}

function Watermark() {
  return (
    <div className="absolute top-[420px] left-[785px] flex items-center">
      <svg width="45" height="40" viewBox="0 0 45 40" className="drop-shadow-[1px_1px_0_rgba(90,60,90,0.7)]">
        <path d="M16 2C7.500 2 1.500 7.800 1.500 14.500C1.500 18.500 3.500 21.800 6.500 24.200L5 29L10.500 26C12.500 26.700 14.500 27 16 27C24.500 27 30.500 21.500 30.500 14.500S24.500 2 16 2Z" fill="#ffe6ff" />
        <path d="M30 14.500C22.500 14.500 17 19.500 17 26S22.500 37 30 37C31.700 37 33.500 36.700 35 36.200L40 38.700L38.700 34.500C41.500 32.500 43.500 29.500 43.500 26C43.500 19.500 37.500 14.500 30 14.500Z" fill="#ffe6ff" stroke="#cf3fcf" strokeWidth="1.200" />
        <g fill="#d33ad6">
          <circle cx="10.500" cy="11" r="2" />
          <circle cx="22" cy="11" r="2" />
          <circle cx="26" cy="21.500" r="1.700" />
          <circle cx="35" cy="21.500" r="1.700" />
        </g>
      </svg>
      <span className="ml-[3px] whitespace-nowrap font-['Noto_Sans_CJK_SC',sans-serif] text-[26.500px] leading-[42px] font-normal tracking-[0.4px] text-white [text-shadow:1px_1px_1px_rgba(70,40,70,0.8)]">
        智善CAE共创未来
      </span>
    </div>
  );
}

export default function App() {
  return (
    <div className="relative flex h-[490px] w-[1080px] flex-col overflow-hidden bg-[#efefef] font-['Noto_Sans',sans-serif]">
      <Ribbon />
      <TabBar />
      <div className="flex h-[403px] border-t border-[#8f9196]">
        <div className="flex w-[183px] shrink-0 flex-col">
          <ProjectManager />
          <div className="h-[3px] shrink-0 bg-[#757b84]" />
          <Properties />
        </div>
        <div className="w-[4px] shrink-0 bg-[#7c8087]" />
        <ModelTree />
        <div className="w-[3px] shrink-0 border-r border-[#8f9196] bg-[#f0f0f0]" />
        <Canvas />
      </div>
      <ContextMenu />
      <Annotation />
      <Cursor />
      <Watermark />
    </div>
  );
}
